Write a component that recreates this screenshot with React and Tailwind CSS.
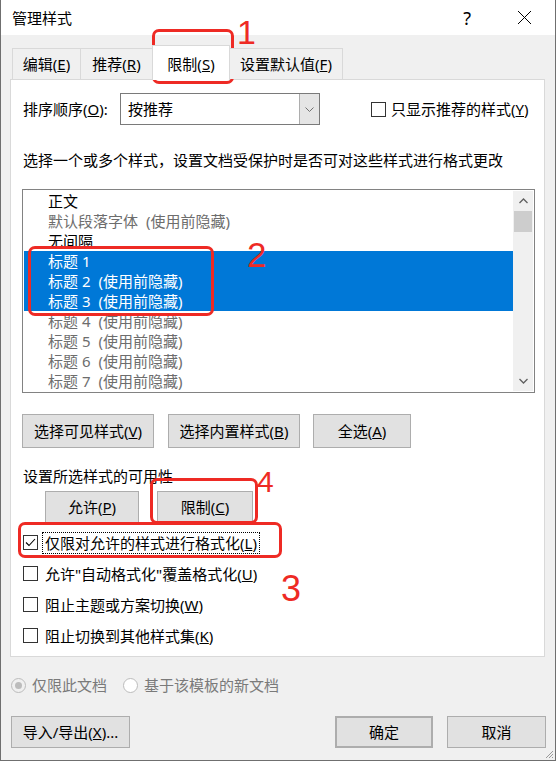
import React from "react";

const FONT = "[font-family:'Noto_Sans','Noto_Sans_CJK_SC',sans-serif]";

function Btn({ children, className = "" }) {
  return (
    <div
      className={
        "flex items-center justify-center bg-[#e1e1e1] border border-[#adadad] text-black " +
        className
      }
    >
      {children}
    </div>
  );
}

function CheckBox({ checked }) {
  return (
    <div className="w-[15px] h-[15px] border border-[#333333] bg-white flex items-center justify-center shrink-0">
      {checked && (
        <svg width="13" height="13" viewBox="0 0 13 13">
          <polyline points="2,6.5 5,9.5 11,3" fill="none" stroke="#000" strokeWidth="1.1" />
        </svg>
      )}
    </div>
  );
}

function Tab({ children, className = "" }) {
  return (
    <div
      className={
        "h-[31px] mb-px flex items-center justify-center bg-[#f0f0f0] border-t border-l border-[#d9d9d9] " +
        className
      }
    >
      {children}
    </div>
  );
}

const rows = [
  { t: "正文", c: "text-black" },
  { t: "默认段落字体", s: true, c: "text-[#6d6d6d]" },
  { t: "无间隔", c: "text-black" },
  { t: "标题 1", sel: true },
  { t: "标题 2", s: true, sel: true },
  { t: "标题 3", s: true, sel: true },
  { t: "标题 4", s: true, c: "text-[#6d6d6d]" },
  { t: "标题 5", s: true, c: "text-[#6d6d6d]" },
  { t: "标题 6", s: true, c: "text-[#6d6d6d]" },
  { t: "标题 7", s: true, c: "text-[#6d6d6d]" },
];

export default function App() {
  return (
    <div
      className={
        "relative w-[556px] h-[761px] bg-[#f0f0f0] border-x border-b border-[#6f6f6f] flex flex-col overflow-hidden text-[15px] leading-[20px] text-black " +
        FONT
      }
    >
      {/* title bar */}
      <div className="h-[35px] bg-white flex items-center shrink-0">
        <span className="ml-[11px]">管理样式</span>
        <span className="ml-auto text-[18px] leading-none">?</span>
        <svg className="ml-[46px] mr-[23px]" width="15" height="15" viewBox="0 0 15 15">
          <path d="M1 1 L14 14 M14 1 L1 14" stroke="#000" strokeWidth="1" fill="none" />
        </svg>
      </div>

      {/* body */}
      <div className="pl-[9px] pt-[10px] flex flex-col">
        {/* tabs */}
        <div className="h-[35px] -mb-px flex items-end pl-[2px] relative z-10">
          <Tab className="w-[68px]">
            编辑(<u>E</u>)
          </Tab>
          <Tab className="w-[72px]">
            推荐(<u>R</u>)
          </Tab>
          <div className="h-[35px] w-[78px] flex items-center justify-center bg-white border-t border-x border-[#d9d9d9] pt-[2px]">
            限制(<u>S</u>)
          </div>
          <Tab className="w-[113px] border-r border-l-0">
            设置默认值(<u>F</u>)
          </Tab>
        </div>

        {/* panel */}
        <div className="w-[535px] h-[578px] bg-white border border-[#d9d9d9] flex flex-col">
          {/* sort row */}
          <div className="mt-[13px] h-[32px] flex items-center pl-[12px]">
            <span className="w-[97px]">
              排序顺序(<u>O</u>):
            </span>
            <div className="w-[200px] h-[32px] border border-[#7a7a7a] flex items-center">
              <span className="pl-[7px] flex-1">按推荐</span>
              <div className="w-[20px] h-full bg-[#e5e5e5] border-l border-[#adadad] flex items-center justify-center">
                <svg width="9" height="5" viewBox="0 0 9 5">
                  <polyline points="0.5,0.5 4.5,4.5 8.5,0.5" fill="none" stroke="#707070" strokeWidth="1" />
                </svg>
              </div>
            </div>
            <div className="ml-[51px] flex items-center gap-[5px]">
              <CheckBox />
              <span>
                只显示推荐的样式(<u>Y</u>)
              </span>
            </div>
          </div>

          {/* description */}
          <div className="mt-[25px] pl-[12px]">选择一个或多个样式，设置文档受保护时是否可对这些样式进行格式更改</div>

          {/* listbox */}
          <div className="ml-[11px] mt-[19px] w-[513px] h-[204px] border border-[#828282] p-px flex">
            <div className="flex-1 flex flex-col">
              {rows.map((r, i) => (
                <div
                  key={i}
                  className={
                    "h-[20px] pl-[24px] flex items-center whitespace-nowrap " +
                    (r.sel ? "bg-[#0078d7] text-white" : r.c)
                  }
                >
                  <span>{r.t}</span>
                  {r.s && <span className="ml-[8px]">(使用前隐藏)</span>}
                </div>
              ))}
            </div>
            <div className="w-[20px] bg-[#f0f0f0] flex flex-col">
              <div className="h-[20px] flex items-center justify-center">
                <svg width="9" height="6" viewBox="0 0 9 6">
                  <polyline points="0.5,5 4.5,1 8.5,5" fill="none" stroke="#606060" strokeWidth="1.3" />
                </svg>
              </div>
              <div className="h-[21px] mx-px bg-[#cdcdcd]" />
              <div className="flex-1" />
              <div className="h-[20px] flex items-center justify-center">
                <svg width="9" height="6" viewBox="0 0 9 6">
                  <polyline points="0.5,1 4.5,5 8.5,1" fill="none" stroke="#606060" strokeWidth="1.3" />
                </svg>
              </div>
            </div>
          </div>

          {/* buttons row */}
          <div className="mt-[21px] ml-[11px] flex">
            <Btn className="w-[132px] h-[34px]">
              选择可见样式(<u>V</u>)
            </Btn>
            <Btn className="w-[132px] h-[34px] ml-[14px]">
              选择内置样式(<u>B</u>)
            </Btn>
            <Btn className="w-[98px] h-[34px] ml-[13px]">
              全选(<u>A</u>)
            </Btn>
          </div>

          <div className="mt-[18px] pl-[12px]">设置所选样式的可用性</div>

          <div className="mt-[5px] ml-[34px] flex">
            <Btn className="w-[94px] h-[32px]">
              允许(<u>P</u>)
            </Btn>
            <Btn className="w-[96px] h-[32px] ml-[18px]">
              限制(<u>C</u>)
            </Btn>
          </div>

          {/* checkboxes */}
          <div className="mt-[4px] pl-[12px] flex flex-col">
            <div className="h-[31px] flex items-center">
              <CheckBox checked />
              <span className="ml-[4px] h-[22px] px-[2px] flex items-center border border-dotted border-black">
                仅限对允许的样式进行格式化(<u>L</u>)
              </span>
            </div>
            <div className="h-[31px] flex items-center gap-[7px]">
              <CheckBox />
              <span>
                允许"自动格式化"覆盖格式化(<u>U</u>)
              </span>
            </div>
            <div className="h-[31px] flex items-center gap-[7px]">
              <CheckBox />
              <span>
                阻止主题或方案切换(<u>W</u>)
              </span>
            </div>
            <div className="h-[31px] flex items-center gap-[7px]">
              <CheckBox />
              <span>
                阻止切换到其他样式集(<u>K</u>)
              </span>
            </div>
          </div>
        </div>

        {/* radios */}
        <div className="mt-[18px] h-[20px] flex items-center pl-[1px] text-[#7a7a7a]">
          <div className="w-[15px] h-[15px] rounded-full border border-[#bcbcbc] bg-[#f0f0f0] flex items-center justify-center">
            <div className="w-[7px] h-[7px] rounded-full bg-[#bcbcbc]" />
          </div>
          <span className="ml-[6px]">仅限此文档</span>
          <div className="ml-[16px] w-[15px] h-[15px] rounded-full border border-[#bcbcbc] bg-white" />
          <span className="ml-[6px]">基于该模板的新文档</span>
        </div>

        {/* bottom buttons */}
        <div className="mt-[21px] flex pl-[1px]">
          <Btn className="w-[119px] h-[32px]">
            导入/导出(<u>X</u>)...
          </Btn>
          <Btn className="ml-[205px] w-[98px] h-[32px] border-2 border-[#0078d7]">确定</Btn>
          <Btn className="ml-[14px] w-[99px] h-[32px]">取消</Btn>
        </div>
      </div>

      {/* resize grip */}
      <svg className="absolute right-[1px] bottom-[1px]" width="11" height="11" viewBox="0 0 11 11">
        <path d="M10 3 L3 10 M10 6 L6 10 M10 9 L9 10" stroke="#9a9a9a" strokeWidth="1" />
      </svg>

      {/* red annotations */}
      <div className="absolute left-[151px] top-[29px] w-[82px] h-[55px] border-[3px] border-[#ee2a24] rounded-[7px]" />
      <div className="absolute left-[236px] top-[15px] text-[34px] leading-none text-[#ee2a24] [font-family:'Liberation_Sans',sans-serif]">1</div>

      <div className="absolute left-[27px] top-[246px] w-[186px] h-[70px] border-[3px] border-[#ee2a24] rounded-[7px]" />
      <div className="absolute left-[246px] top-[237px] text-[35px] leading-none text-[#ee2a24] [font-family:'Liberation_Sans',sans-serif]">2</div>

      <div className="absolute left-[149px] top-[478px] w-[108px] h-[46px] border-[3px] border-[#ee2a24] rounded-[7px]" />
      <div className="absolute left-[256px] top-[467px] text-[30px] leading-none text-[#ee2a24] [font-family:'Liberation_Sans',sans-serif]">4</div>

      <div className="absolute left-[17px] top-[522px] w-[264px] h-[36px] border-[3px] border-[#ee2a24] rounded-[7px]" />
      <div className="absolute left-[280px] top-[571px] text-[36px] leading-none text-[#ee2a24] [font-family:'Liberation_Sans',sans-serif]">3</div>
    </div>
  );
}
